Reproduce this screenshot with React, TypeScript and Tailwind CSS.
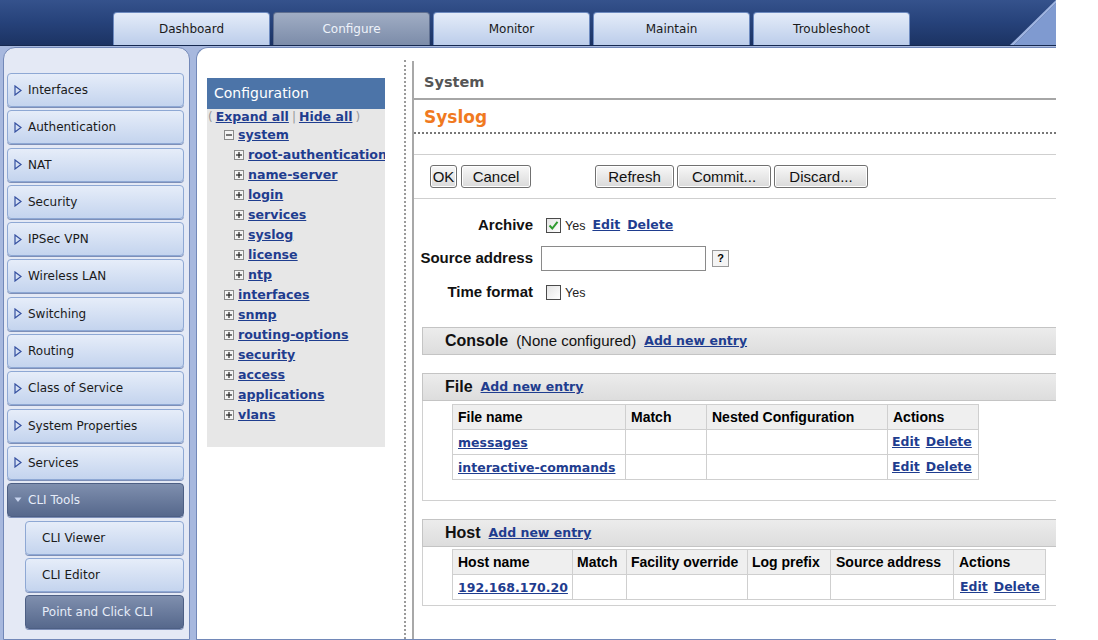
const tabs = ["Dashboard", "Configure", "Monitor", "Maintain", "Troubleshoot"];
const navItems = [
  "Interfaces",
  "Authentication",
  "NAT",
  "Security",
  "IPSec VPN",
  "Wireless LAN",
  "Switching",
  "Routing",
  "Class of Service",
  "System Properties",
  "Services",
];
const systemChildren = ["root-authentication", "name-server", "login", "services", "syslog", "license", "ntp"];
const topLevel = ["interfaces", "snmp", "routing-options", "security", "access", "applications", "vlans"];

function Arrow({ down }: { down?: boolean }) {
  if (down) {
    return (
      <svg width="8" height="8" viewBox="0 0 8 8" className="shrink-0">
        <polygon points="0.5,1.5 7.5,1.5 4,6" fill="#c8d4ee" />
      </svg>
    );
  }
  return (
    <svg width="8" height="11" viewBox="0 0 8 11" className="shrink-0">
      <polygon points="1,1 7,5.5 1,10" fill="none" stroke="#3550a0" strokeWidth="1.2" />
    </svg>
  );
}

function NavItem({ label, dark, sub, arrow }: { label: string; dark?: boolean; sub?: boolean; arrow?: "right" | "down" }) {
  return (
    <div
      className={
        "h-[34px] flex items-center gap-[6px] rounded-[4px] border text-[12px] font-['DejaVu_Sans',sans-serif] shadow-[0_1px_0_#7d8fb8] " +
        (sub ? "ml-[18px] pl-[16px] " : "pl-[6px] ") +
        (dark
          ? "bg-gradient-to-b from-[#7f8fae] to-[#56688c] border-[#4d5f84] text-[#e6ecf8]"
          : "bg-gradient-to-b from-[#e6edf9] to-[#c4d4ee] border-[#8ea8d4] text-[#1a1a1a]")
      }
    >
      {arrow === "right" && <Arrow />}
      {arrow === "down" && <Arrow down />}
      <span>{label}</span>
    </div>
  );
}

function TreeBox({ minus }: { minus?: boolean }) {
  return (
    <span className="w-[10px] h-[10px] border border-[#8a8a8a] bg-[#f4f4f4] flex items-center justify-center shrink-0">
      <svg width="8" height="8" viewBox="0 0 8 8">
        <line x1="1" y1="4" x2="7" y2="4" stroke="#222" strokeWidth="1.2" />
        {!minus && <line x1="4" y1="1" x2="4" y2="7" stroke="#222" strokeWidth="1.2" />}
      </svg>
    </span>
  );
}

function TreeRow({ label, level, minus }: { label: string; level: number; minus?: boolean }) {
  return (
    <div className={"h-[20px] flex items-center gap-[4px] whitespace-nowrap " + (level === 2 ? "pl-[27px]" : "pl-[17px]")}>
      <TreeBox minus={minus} />
      <a className="text-[12.6px] font-bold text-[#1f3d8f] underline font-['DejaVu_Sans',sans-serif]">{label}</a>
    </div>
  );
}

function Link({ children }: { children: React.ReactNode }) {
  return <a className="text-[12.5px] font-bold text-[#1f3d8f] underline font-['DejaVu_Sans',sans-serif] whitespace-nowrap">{children}</a>;
}

function Btn({ label, w }: { label: string; w: string }) {
  return (
    <button
      className={
        "h-[23px] border border-[#707070] rounded-[3px] bg-gradient-to-b from-[#f8f8f8] to-[#dadada] text-[15px] text-[#111] leading-none shadow-[inset_0_0_0_1px_#fff] " +
        w
      }
    >
      {label}
    </button>
  );
}

function Check({ checked }: { checked?: boolean }) {
  return (
    <span className="w-[15px] h-[15px] border border-[#4a4a4a] bg-gradient-to-br from-[#e4e4e4] to-[#ffffff] flex items-center justify-center shrink-0">
      {checked && (
        <svg width="11" height="11" viewBox="0 0 11 11">
          <polyline points="1.5,5.5 4.3,8.5 9.5,1.8" fill="none" stroke="#2f9a2f" strokeWidth="2" />
        </svg>
      )}
    </span>
  );
}

function SectionBar({ children }: { children: React.ReactNode }) {
  return (
    <div className="h-[28px] flex items-center gap-[8px] pl-[22px] border border-r-0 border-[#c4c4c4] bg-gradient-to-b from-[#ececec] to-[#dddddd]">
      {children}
    </div>
  );
}

export default function App() {
  return (
    <div className="w-[1098px] h-[640px] bg-white overflow-hidden font-['Liberation_Sans',Arial,sans-serif]">
      {/* header */}
      <div className="w-[1056px] h-[46px] flex items-end bg-gradient-to-b from-[#35528c] via-[#26427a] to-[#1c3363] border-b border-[#15284f]">
        <div className="flex gap-[3px] pl-[113px] h-[33px]">
          {tabs.map((t) => (
            <div
              key={t}
              className={
                "w-[157px] h-full flex items-center justify-center rounded-t-[4px] border border-b-0 text-[12px] font-['DejaVu_Sans',sans-serif] " +
                (t === "Configure"
                  ? "bg-gradient-to-b from-[#a0adc4] to-[#7c8ca9] border-[#5f6f90] text-[#eef2fa]"
                  : "bg-gradient-to-b from-[#e4ecf9] to-[#bccdea] border-[#6d8abf] text-[#1a1a1a]")
              }
            >
              {t}
            </div>
          ))}
        </div>
        <svg width="142" height="46" viewBox="0 0 142 46" className="ml-auto self-stretch">
          <polygon points="100,45 142,3 142,45" fill="#7f9ad0" />
          <polygon points="96,45 142,0 142,3 100,45" fill="#9fb4e0" />
        </svg>
      </div>

      {/* body */}
      <div className="w-[1056px] h-[594px] flex bg-[#a7b8de]">
        {/* sidebar */}
        <div className="w-[187px] ml-[3px] mt-[1px] rounded-t-[12px] border border-[#7288b8] bg-[#e4e9f5] pt-[25px] pl-[3px] pr-[5px] flex flex-col gap-[3.3px]">
          {navItems.map((n) => (
            <NavItem key={n} label={n} arrow="right" />
          ))}
          <NavItem label="CLI Tools" dark arrow="down" />
          <NavItem label="CLI Viewer" sub />
          <NavItem label="CLI Editor" sub />
          <NavItem label="Point and Click CLI" sub dark />
        </div>

        {/* main panel */}
        <div className="flex-1 ml-[6px] mt-[1px] rounded-tl-[12px] border border-r-0 border-[#7288b8] bg-white flex">
          {/* tree */}
          <div className="w-[178px] ml-[10px] mt-[30px] h-[369px] bg-[#e7e7e7] shrink-0 overflow-hidden">
            <div className="h-[31px] bg-[#4c74a8] flex items-center pl-[7px] text-white text-[14px] font-['DejaVu_Sans',sans-serif]">
              Configuration
            </div>
            <div className="h-[16px] flex items-center pl-[1px] gap-[3px] text-[#999] text-[12px] font-['DejaVu_Sans',sans-serif] whitespace-nowrap">
              <span>(</span>
              <Link>Expand all</Link>
              <span>|</span>
              <Link>Hide all</Link>
              <span>)</span>
            </div>
            <div>
              <TreeRow label="system" level={1} minus />
              {systemChildren.map((c) => (
                <TreeRow key={c} label={c} level={2} />
              ))}
              {topLevel.map((c) => (
                <TreeRow key={c} label={c} level={1} />
              ))}
            </div>
          </div>

          {/* separators */}
          <div className="ml-[19px] mt-[12px] border-l-2 border-dotted border-[#9a9a9a]" />
          <div className="ml-[6px] mt-[13px] border-l-2 border-[#a8a8a8]" />

          {/* content */}
          <div className="flex-1 mt-[13px] flex flex-col">
            <div className="h-[39px] flex items-end pb-[4px] pl-[10px] border-b-2 border-[#a6a6a6] text-[14.5px] font-bold text-[#555] font-['DejaVu_Sans',sans-serif]">
              System
            </div>
            <div className="h-[34px] flex items-center pt-[4px] pl-[10px] border-b-2 border-dotted border-[#777] text-[17px] font-bold text-[#f07a1f] font-['DejaVu_Sans',sans-serif]">
              Syslog
            </div>
            <div className="h-[21px] border-b border-[#cfcfcf]" />
            <div className="h-[44px] flex items-center pl-[16px] border-b border-[#cfcfcf]">
              <Btn label="OK" w="w-[27px]" />
              <span className="w-[4px]" />
              <Btn label="Cancel" w="w-[70px]" />
              <span className="w-[64px]" />
              <Btn label="Refresh" w="w-[79px]" />
              <span className="w-[3px]" />
              <Btn label="Commit..." w="w-[94px]" />
              <span className="w-[3px]" />
              <Btn label="Discard..." w="w-[94px]" />
            </div>

            {/* form */}
            <div className="pt-[14px] flex flex-col">
              <div className="h-[24px] flex items-center">
                <span className="w-[119px] text-right text-[15px] font-bold text-[#111]">Archive</span>
                <span className="ml-[13px] flex items-center gap-[4px]">
                  <Check checked />
                  <span className="text-[12.5px] text-[#222] mt-[3px]">Yes</span>
                  <span className="ml-[3px] flex gap-[7px]">
                    <Link>Edit</Link>
                    <Link>Delete</Link>
                  </span>
                </span>
              </div>
              <div className="h-[42px] flex items-center">
                <span className="w-[119px] text-right text-[15px] font-bold text-[#111] whitespace-nowrap">Source address</span>
                <span className="ml-[8px] w-[165px] h-[25px] border border-[#8a8a8a] bg-white" />
                <span className="ml-[6px] w-[17px] h-[17px] border border-[#999] bg-[#f4f4f4] flex items-center justify-center text-[11px] font-bold">
                  ?
                </span>
              </div>
              <div className="h-[26px] flex items-center">
                <span className="w-[119px] text-right text-[15px] font-bold text-[#111]">Time format</span>
                <span className="ml-[13px] flex items-center gap-[4px]">
                  <Check />
                  <span className="text-[12.5px] text-[#222] mt-[3px]">Yes</span>
                </span>
              </div>
            </div>

            {/* sections */}
            <div className="ml-[8px] mt-[22px] flex flex-col">
              <SectionBar>
                <span className="text-[16px] font-bold text-[#111]">Console</span>
                <span className="text-[15px] text-[#111]">(None configured)</span>
                <Link>Add new entry</Link>
              </SectionBar>

              <div className="mt-[18px]">
                <SectionBar>
                  <span className="text-[16px] font-bold text-[#111]">File</span>
                  <Link>Add new entry</Link>
                </SectionBar>
                <div className="border-l border-b border-[#d0d0d0] pl-[29px] pt-[3px] pb-[20px]">
                  <table className="border-collapse text-[14px]">
                    <thead>
                      <tr className="h-[25px] bg-[#efefef]">
                        <th className="w-[173px] border border-[#cfcfcf] text-left pl-[5px] font-bold">File name</th>
                        <th className="w-[81px] border border-[#cfcfcf] text-left pl-[5px] font-bold">Match</th>
                        <th className="w-[181px] border border-[#cfcfcf] text-left pl-[5px] font-bold">Nested Configuration</th>
                        <th className="w-[91px] border border-[#cfcfcf] text-left pl-[5px] font-bold">Actions</th>
                      </tr>
                    </thead>
                    <tbody>
                      {["messages", "interactive-commands"].map((f) => (
                        <tr key={f} className="h-[25px]">
                          <td className="border border-[#cfcfcf] pl-[5px]">
                            <Link>{f}</Link>
                          </td>
                          <td className="border border-[#cfcfcf]" />
                          <td className="border border-[#cfcfcf]" />
                          <td className="border border-[#cfcfcf] pl-[4px]">
                            <span className="flex gap-[6px]">
                              <Link>Edit</Link>
                              <Link>Delete</Link>
                            </span>
                          </td>
                        </tr>
                      ))}
                    </tbody>
                  </table>
                </div>
              </div>

              <div className="mt-[18px]">
                <SectionBar>
                  <span className="text-[16px] font-bold text-[#111]">Host</span>
                  <Link>Add new entry</Link>
                </SectionBar>
                <div className="border-l border-b border-[#d0d0d0] pl-[29px] pt-[2px] pb-[5px]">
                  <table className="border-collapse text-[14px]">
                    <thead>
                      <tr className="h-[25px] bg-[#efefef]">
                        <th className="w-[120px] border border-[#cfcfcf] text-left pl-[5px] font-bold whitespace-nowrap">Host name</th>
                        <th className="w-[54px] border border-[#cfcfcf] text-left pl-[4px] font-bold">Match</th>
                        <th className="w-[121px] border border-[#cfcfcf] text-left pl-[4px] font-bold whitespace-nowrap">Facility override</th>
                        <th className="w-[83px] border border-[#cfcfcf] text-left pl-[4px] font-bold whitespace-nowrap">Log prefix</th>
                        <th className="w-[123px] border border-[#cfcfcf] text-left pl-[5px] font-bold whitespace-nowrap">Source address</th>
                        <th className="w-[92px] border border-[#cfcfcf] text-left pl-[5px] font-bold">Actions</th>
                      </tr>
                    </thead>
                    <tbody>
                      <tr className="h-[25px]">
                        <td className="border border-[#cfcfcf] pl-[5px]">
                          <Link>192.168.170.20</Link>
                        </td>
                        <td className="border border-[#cfcfcf]" />
                        <td className="border border-[#cfcfcf]" />
                        <td className="border border-[#cfcfcf]" />
                        <td className="border border-[#cfcfcf]" />
                        <td className="border border-[#cfcfcf] pl-[6px]">
                          <span className="flex gap-[6px]">
                            <Link>Edit</Link>
                            <Link>Delete</Link>
                          </span>
                        </td>
                      </tr>
                    </tbody>
                  </table>
                </div>
              </div>
            </div>
          </div>
        </div>
      </div>
    </div>
  );
}
